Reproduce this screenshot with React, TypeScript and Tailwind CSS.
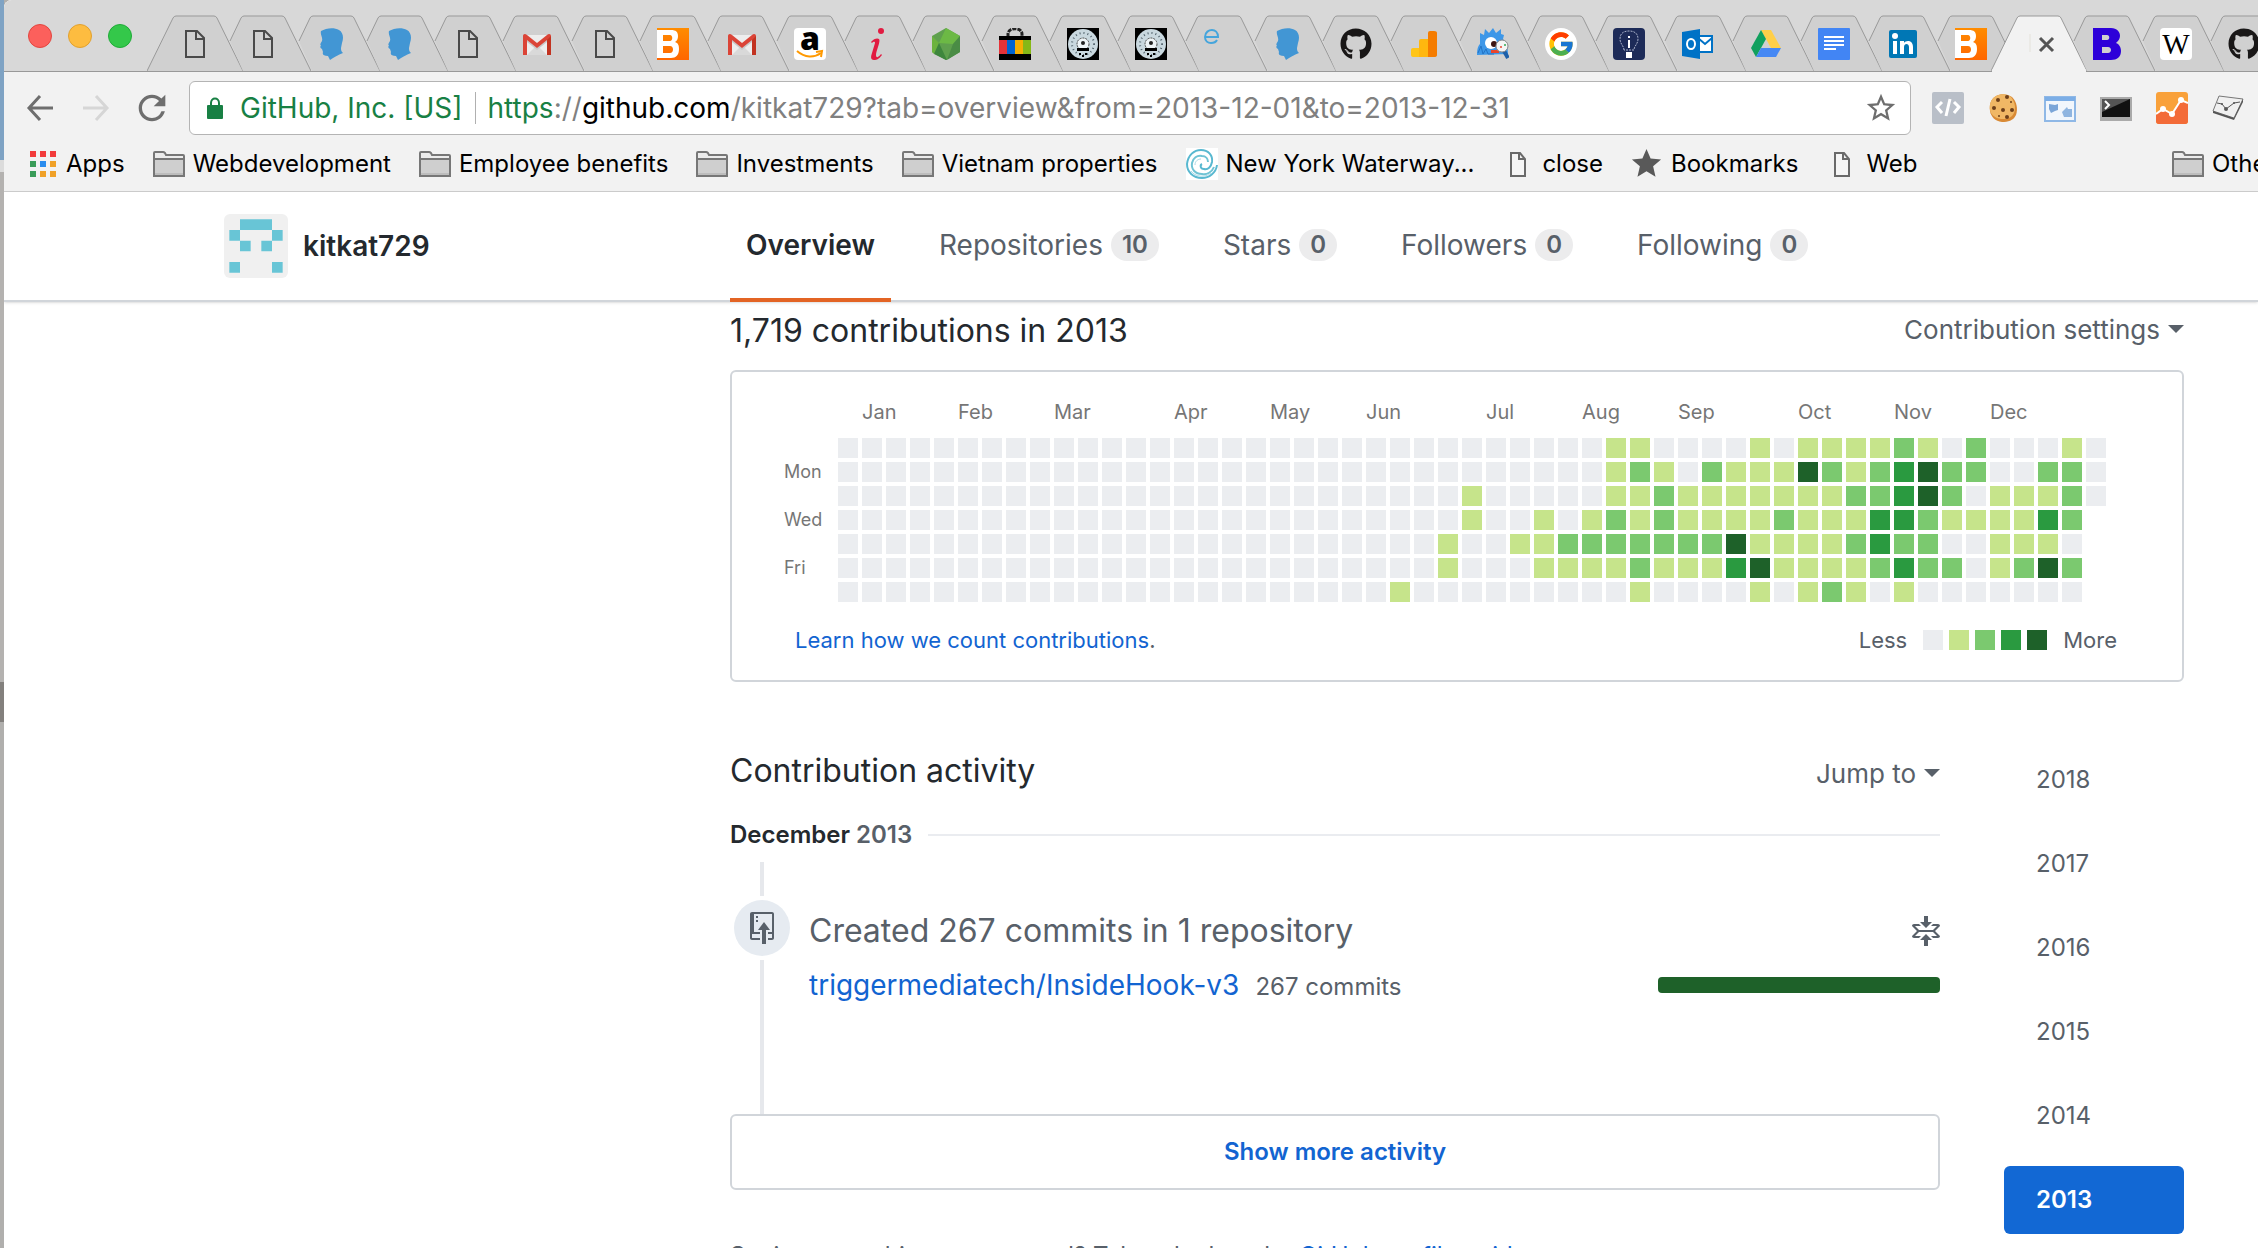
import React from "react";
import { FaGithub } from "react-icons/fa6";
import { FcGoogle } from "react-icons/fc";
import { MdRefresh, MdStar, MdStarBorder } from "react-icons/md";

/* ---------- favicons, all on a 32px square ---------- */

function Icon({ children, box = "0 0 32 32" }: { children: React.ReactNode; box?: string }) {
  return (
    <svg viewBox={box} className="size-8 shrink-0" aria-hidden="true">
      {children}
    </svg>
  );
}

const PageIcon = () => (
  <Icon>
    <path d="M7 3h11l7 7v19H7z M17 3v8h8" fill="none" stroke="#4a4a4a" strokeWidth="2" />
  </Icon>
);

const HeadIcon = () => (
  <Icon>
    <path
      d="M5 3C10 0 18-1 23 2c4 2 5 8 3 13l-1 5c0 2 0 3 2 5-5 2-9 4-13 7l-2-4c-4 0-6-1-5-4l-1-3c-2-1-2-2-1-4-1 0-1-1 1-4 1-4-2-6-1-10z"
      fill="#4296d4"
    />
  </Icon>
);

const GmailIcon = () => (
  <Icon>
    <path d="M3 7h26v20H3z" fill="#ededed" />
    <path d="M6 27l10-10 10 10z" fill="#d9d9d9" />
    <path d="M6 10l10 8 10-8v4L16 22 6 14z" fill="#c9c9c9" />
    <path d="M2 8c0-2 2-3 4-1l10 8 10-8c2-2 4-1 4 1v19h-4V12l-10 8-10-8v15H2z" fill="#db4437" />
    <path d="M26 12l4-4v19h-4z" fill="#c23321" />
  </Icon>
);

const BloggerIcon = () => (
  <Icon>
    <defs>
      <linearGradient id="blogger" x1="0" y1="0" x2="0" y2="1">
        <stop offset="0" stopColor="#ff8c00" />
        <stop offset="1" stopColor="#ff6600" />
      </linearGradient>
    </defs>
    <path d="M0 0h32v32H0z" fill="url(#blogger)" />
    <path
      fillRule="evenodd"
      d="M0 2h14c5 0 7 2 7 6 0 3-1 5-3 6 3 1 4 3 4 7 0 6-3 9-8 9H0zm6 5v6h7c3 0 3-6 0-6zm0 11v7h7c4 0 4-7 0-7z"
      fill="#fff"
    />
  </Icon>
);

const AmazonIcon = () => (
  <Icon>
    <rect width="32" height="32" rx="4" fill="#fff" />
    <text x="16" y="22" textAnchor="middle" fontFamily="Open Sans" fontWeight="800" fontSize="32">
      a
    </text>
    <path d="M3 23c8 7 17 7 24 2" fill="none" stroke="#f90" strokeWidth="2" />
    <path d="M22 24l6-1-1 6" fill="none" stroke="#f90" strokeWidth="2" />
  </Icon>
);

const ItalicIcon = () => (
  <Icon>
    <circle cx="19" cy="3" r="3" fill="#e11b41" />
    <path
      d="M9 14c3-4 7-4 8-3 2 2-3 12-3 16 0 3 2 3 5-1l1 1c-3 4-5 5-8 5-4 0-3-4-2-7l3-10c0-2-2-1-3 0z"
      fill="#e11b41"
    />
  </Icon>
);

const NodeIcon = () => (
  <Icon>
    <path d="M16 0l14 8v16l-14 8L2 24V8z" fill="#5fa04e" />
    <path d="M16 0l14 8-7 8-14-1z" fill="#6cb945" />
    <path d="M2 8l7 7L4 26l-2-2z" fill="#6cb33e" />
    <path d="M9 15l8 17-1 0L4 26z" fill="#3e863d" />
    <path d="M30 8v16l-13 8 6-16z" fill="#4a8c45" />
  </Icon>
);

const BagIcon = () => (
  <Icon>
    <path d="M9 9V6c0-7 14-7 14 0v3" fill="none" stroke="#222" strokeWidth="3" strokeDasharray="4 1" />
    <path d="M0 8h32v24H0z" fill="#000" />
    <path d="M0 12h8v14H0z" fill="#e53238" />
    <path d="M8 12h8v14H8z" fill="#0064d2" />
    <path d="M16 12h8v14h-8z" fill="#f5af02" />
    <path d="M24 12h8v14h-8z" fill="#86b817" />
  </Icon>
);

const GaugeIcon = () => (
  <Icon>
    <path d="M0 0h32v32H0z" fill="#000" />
    <circle cx="16" cy="16" r="15" fill="#c9d8df" />
    <circle cx="16" cy="16" r="11" fill="none" stroke="#51626b" strokeWidth="2" strokeDasharray="1 3" />
    <circle cx="16" cy="16" r="6" fill="#eef4f7" stroke="#444" strokeWidth="1" strokeDasharray="2 1" />
    <circle cx="16" cy="15" r="2" fill="#222" />
    <path d="M10 20h12v3H10zM12 25h2v2h-2zM18 25h2v2h-2zM15 27h2v2h-2z" fill="#000" />
  </Icon>
);

const LetterEIcon = () => (
  <Icon>
    <path d="M1 9h13c0-5-3-7-6-7S1 4 1 9c0 4 3 6 6 6 3 0 5-1 6-3" fill="none" stroke="#45a5dc" strokeWidth="2" />
  </Icon>
);

const OctocatIcon = () => <FaGithub className="size-8 shrink-0 text-[#191717]" aria-hidden="true" />;

const AnalyticsIcon = () => (
  <Icon>
    <path d="M3 22q0-2 2-2h6v9H5q-2 0-2-2z" fill="#ffc517" />
    <path d="M11 13q0-2 2-2h7v18h-9z" fill="#ffb70f" />
    <path d="M20 5q0-2 2-2h4q3 0 3 2v22q0 2-3 2h-6z" fill="#f57c00" />
  </Icon>
);

const MonsterIcon = () => (
  <Icon>
    <path
      d="M0 27c0-6 1-9 3-11L3 5l4 2 1-6 4 4 4-5 3 5 5-4v5l3 1-1 4c3 3 5 8 5 15z"
      fill="#3d97e8"
    />
    <path d="M1 25l3-7 2 8 3-5 2 5h6" fill="none" stroke="#2373c4" strokeWidth="1" />
    <circle cx="14" cy="15" r="6" fill="#fff" />
    <circle cx="17" cy="16" r="3" fill="#3b1512" />
    <path d="M14 22h8v3h-8z" fill="#e8452c" />
    <path d="M27 23l4 7" stroke="#1e5fa8" strokeWidth="4" />
    <circle cx="25" cy="18" r="6" fill="#f5f5f5" stroke="#888" strokeWidth="1" />
    <circle cx="24" cy="19" r="1" fill="#e8452c" />
    <circle cx="28" cy="17" r="1" fill="#35a853" />
  </Icon>
);

const GoogleIcon = () => (
  <span className="flex size-8 shrink-0 items-center justify-center rounded-full bg-white">
    <FcGoogle className="size-7" aria-hidden="true" />
  </span>
);

const BulbIcon = () => (
  <Icon>
    <rect width="32" height="32" rx="4" fill="#1d2b58" />
    <path
      d="M11 22c0-4-4-6-4-11C7 5 11 3 16 3s9 2 9 8c0 5-4 7-4 11z"
      fill="none"
      stroke="#a9b1c9"
      strokeWidth="1"
      strokeDasharray="2 1"
    />
    <path d="M15 8h2v2h-2zM15 12h2v8h-2zM13 24h6v6h-6z" fill="#fff" />
  </Icon>
);

const OutlookIcon = () => (
  <Icon>
    <path d="M16 8h14v16H16z" fill="#fff" stroke="#0072c6" strokeWidth="2" />
    <path d="M16 10l7 6 7-6" fill="none" stroke="#0072c6" strokeWidth="2" />
    <path d="M0 4l18-3v30L0 28z" fill="#0072c6" />
    <ellipse cx="9" cy="16" rx="4" ry="5" fill="none" stroke="#fff" strokeWidth="2" />
  </Icon>
);

const DriveIcon = () => (
  <Icon>
    <path d="M11 2h10l10 18H21z" fill="#ffcf48" />
    <path d="M11 2l5 9L6 29 1 20z" fill="#11a05e" />
    <path d="M11 20h20l-5 9H6z" fill="#4688f4" />
  </Icon>
);

const DocsIcon = () => (
  <Icon>
    <rect width="32" height="32" rx="1" fill="#4285f4" />
    <path d="M6 9h20M6 13h20M6 17h20M6 21h12" stroke="#fff" strokeWidth="2" />
  </Icon>
);

const LinkedInIcon = () => (
  <Icon>
    <rect x="2" y="2" width="28" height="28" rx="2" fill="#0077b5" />
    <circle cx="8" cy="8" r="3" fill="#fff" />
    <path d="M6 13h4v13H6zM13 13h4v2c2-3 9-3 9 4v7h-4v-7c0-4-5-4-5 0v7h-4z" fill="#fff" />
  </Icon>
);

const BlueBIcon = () => (
  <Icon>
    <path
      fillRule="evenodd"
      d="M2 0h18c6 0 9 4 9 8 0 3-2 5-4 7 3 1 5 4 5 8 0 6-4 9-10 9H2zm9 7v5h5c3 0 3-5 0-5zm0 12v6h6c4 0 4-6 0-6z"
      fill="#2d00d9"
    />
  </Icon>
);

const WikipediaIcon = () => (
  <Icon>
    <rect width="32" height="32" rx="4" fill="#fff" />
    <text x="16" y="26" textAnchor="middle" fontFamily="Liberation Serif" fontSize="29">
      W
    </text>
  </Icon>
);

/* ---------- tab strip ---------- */

type Tab = { title: string; icon?: () => React.ReactElement };

const TABS: Tab[] = [
  { title: "Page 1", icon: PageIcon },
  { title: "Page 2", icon: PageIcon },
  { title: "Profile 1", icon: HeadIcon },
  { title: "Profile 2", icon: HeadIcon },
  { title: "Page 3", icon: PageIcon },
  { title: "Gmail 1", icon: GmailIcon },
  { title: "Page 4", icon: PageIcon },
  { title: "Blogger 1", icon: BloggerIcon },
  { title: "Gmail 2", icon: GmailIcon },
  { title: "Amazon", icon: AmazonIcon },
  { title: "Info", icon: ItalicIcon },
  { title: "Node", icon: NodeIcon },
  { title: "Shop", icon: BagIcon },
  { title: "Speed 1", icon: GaugeIcon },
  { title: "Speed 2", icon: GaugeIcon },
  { title: "E", icon: LetterEIcon },
  { title: "Profile 3", icon: HeadIcon },
  { title: "GitHub 1", icon: OctocatIcon },
  { title: "Analytics", icon: AnalyticsIcon },
  { title: "Monster", icon: MonsterIcon },
  { title: "Google", icon: GoogleIcon },
  { title: "Ideas", icon: BulbIcon },
  { title: "Outlook", icon: OutlookIcon },
  { title: "Drive", icon: DriveIcon },
  { title: "Docs", icon: DocsIcon },
  { title: "LinkedIn", icon: LinkedInIcon },
  { title: "Blogger 2", icon: BloggerIcon },
  { title: "Current tab" },
  { title: "Bootstrap", icon: BlueBIcon },
  { title: "Wikipedia", icon: WikipediaIcon },
  { title: "GitHub 2", icon: OctocatIcon },
];

function TabShape({ active, first }: { active: boolean; first: boolean }) {
  const whole = active || first;
  const outline = whole
    ? "M0 56L26 3Q27 1 29 1H67Q69 1 70 3L96 56"
    : "M15 26L26 3Q27 1 29 1H67Q69 1 70 3L96 56";
  const body = outline + (whole ? "Z" : "H28Z");
  return (
    <svg
      viewBox="0 0 96 57"
      className="absolute -left-3.5 top-0 h-[57px] w-24"
      aria-hidden="true"
    >
      <path d={body} fill={active ? "#f2f2f2" : "#d0d0d0"} />
      <path d={outline} fill="none" stroke="#999" strokeWidth="1" />
      {active ? <path d="M1 56h94" stroke="#f2f2f2" strokeWidth="3" /> : null}
    </svg>
  );
}

function TabStrip() {
  return (
    <div className="flex h-[72px] items-end border-b border-[#999] bg-[#d8d8d8]">
      <div className="flex w-[157px] shrink-0 gap-4 self-center pl-6">
        <button aria-label="Close window" className="size-6 rounded-full border border-[#e2463f] bg-[#fc605c]" />
        <button aria-label="Minimize window" className="size-6 rounded-full border border-[#e1a12f] bg-[#fdbc40]" />
        <button aria-label="Zoom window" className="size-6 rounded-full border border-[#1fab38] bg-[#34c84a]" />
      </div>
      <div role="tablist" className="-mr-5 flex h-14 flex-1">
        {TABS.map((tab, i) => (
          <button
            key={tab.title}
            role="tab"
            aria-selected={!tab.icon}
            aria-label={tab.title}
            className="relative min-w-0 flex-1"
          >
            <TabShape active={!tab.icon} first={i === 0} />
            <span className="relative flex h-full items-center justify-center pt-0.5">
              {tab.icon ? (
                <tab.icon />
              ) : (
                <Icon>
                  <path d="M7 6v18" stroke="#e4e2da" strokeWidth="1" />
                  <path d="M17 10l13 13M30 10L17 23" stroke="#555" strokeWidth="3" />
                </Icon>
              )}
            </span>
          </button>
        ))}
      </div>
    </div>
  );
}

/* ---------- toolbar ---------- */

const EXTENSIONS: { name: string; art: React.ReactElement }[] = [
  {
    name: "Code inspector",
    art: (
      <Icon>
        <rect width="32" height="32" rx="2" fill="#b9bfc8" />
        <path d="M10 10l-5 5 5 6M22 10l5 5-5 6M18 7l-4 17" fill="none" stroke="#fff" strokeWidth="3" />
      </Icon>
    ),
  },
  {
    name: "Cookies",
    art: (
      <Icon>
        <path d="M8 4c5-3 12-2 16 1 5 5 6 12 4 18-3 6-8 7-14 7C7 29 3 25 2 19 1 12 3 7 8 4z" fill="#d98a35" />
        <path d="M8 4c5-3 12-2 15 1 4 5 5 11 3 16-3 6-8 6-13 6C7 26 3 23 2 18 1 12 3 7 8 4z" fill="#f0b765" />
        <g fill="#6d3f1a">
          <circle cx="10" cy="8" r="2" />
          <circle cx="19" cy="5" r="2" />
          <circle cx="23" cy="10" r="1" />
          <circle cx="6" cy="16" r="2" />
          <circle cx="15" cy="18" r="2" />
          <circle cx="24" cy="18" r="2" />
          <circle cx="11" cy="24" r="1" />
          <circle cx="19" cy="25" r="2" />
        </g>
      </Icon>
    ),
  },
  {
    name: "Window resizer",
    art: (
      <Icon>
        <path d="M1 5h30v24H1z" fill="#f1f6fc" stroke="#8fb8e6" strokeWidth="2" />
        <path d="M1 5h30v4H1z" fill="#7caee6" />
        <path d="M5 12l6 1 3-1 0 6-3 1-4 2-2-4z" fill="#7aa5d8" />
        <path d="M18 20l5-5 1 2 4 0v8h-8z" fill="#8fb5e0" />
      </Icon>
    ),
  },
  {
    name: "Terminal",
    art: (
      <Icon>
        <path d="M0 5h32v24H0z" fill="#aaa" />
        <path d="M2 7h28v18H2z" fill="#111" />
        <path d="M2 7h28L2 20z" fill="#555" />
        <path d="M5 9l4 4-4 4" fill="none" stroke="#fff" strokeWidth="2" />
      </Icon>
    ),
  },
  {
    name: "Page analytics",
    art: (
      <Icon>
        <rect width="32" height="32" rx="3" fill="#f9a13a" />
        <path d="M0 22l7-5 9 6 9-14 7 2v18q0 3-3 3H3q-3 0-3-3z" fill="#f36b38" />
        <path d="M0 22l7-5 9 5L25 8l7 3" fill="none" stroke="#fff" strokeWidth="2" />
        <circle cx="7" cy="17" r="3" fill="#fff" />
        <circle cx="16" cy="22" r="3" fill="#fff" />
        <circle cx="25" cy="8" r="3" fill="#fff" />
      </Icon>
    ),
  },
  {
    name: "Graph viewer",
    art: (
      <Icon>
        <path d="M7 4l24 3-9 19L1 19z" fill="#f0f0f0" stroke="#777" strokeWidth="1" />
        <path d="M1 19l21 7 9-19v3l-9 18L1 21z" fill="#555" />
        <path d="M5 11l5 1 4 5 8-6 6-1" fill="none" stroke="#555" strokeWidth="1" />
        <circle cx="14" cy="17" r="2" fill="#555" />
        <circle cx="10" cy="12" r="1" fill="#555" />
        <circle cx="22" cy="11" r="1" fill="#555" />
      </Icon>
    ),
  },
];

function Toolbar() {
  return (
    <div className="flex h-[72px] items-center pl-5 pr-3.5">
      <button aria-label="Back" className="w-9 shrink-0">
        <svg viewBox="0 0 36 32" className="h-8 w-9" aria-hidden="true">
          <path d="M29 16H5M16 4L5 16l11 12" fill="none" stroke="#6e6e6e" strokeWidth="3" />
        </svg>
      </button>
      <button aria-label="Forward" className="ml-5 w-9 shrink-0">
        <svg viewBox="0 0 36 32" className="h-8 w-9" aria-hidden="true">
          <path d="M3 16h24M16 4l11 12-11 12" fill="none" stroke="#d6d6d6" strokeWidth="3" />
        </svg>
      </button>
      <button aria-label="Reload" className="ml-4 shrink-0">
        <MdRefresh className="size-10 text-[#6e6e6e]" aria-hidden="true" />
      </button>
      <div className="ml-[17px] flex h-[54px] flex-1 items-center rounded-md border border-[#b4b4b4] bg-white pl-[17px] pr-3 text-[28px]">
        <svg viewBox="0 0 16 22" className="mr-[17px] h-[22px] w-4 shrink-0" aria-hidden="true">
          <path d="M4 9V6c0-6 8-6 8 0v3" fill="none" stroke="#188044" strokeWidth="2" />
          <rect y="8" width="16" height="14" rx="1" fill="#188044" />
        </svg>
        <span className="whitespace-nowrap text-[#188044]">GitHub, Inc. [US]</span>
        <span className="mx-3 h-8 w-px bg-[#b0b0b0]" />
        <label htmlFor="address" className="whitespace-nowrap text-[#808080]">
          <span className="text-[#188044]">https</span>://<span className="text-black">github.com</span>
        </label>
        <input
          id="address"
          defaultValue="/kitkat729?tab=overview&from=2013-12-01&to=2013-12-31"
          className="min-w-0 flex-1 bg-transparent text-[#808080] outline-none"
        />
        <button aria-label="Bookmark this page">
          <MdStarBorder className="size-[34px] text-[#6e6e6e]" aria-hidden="true" />
        </button>
      </div>
      <div className="ml-[21px] flex gap-6">
        {EXTENSIONS.map((ext) => (
          <button key={ext.name} aria-label={ext.name}>
            {ext.art}
          </button>
        ))}
      </div>
    </div>
  );
}

/* ---------- bookmarks bar ---------- */

const FolderIcon = () => (
  <Icon>
    <path d="M1 28V5q0-1 1-1h8q1 0 2 1l1 2h17q1 0 1 1v20z" fill="#ececec" stroke="#777" strokeWidth="2" />
    <path d="M1 11h30v17H1z" fill="#cfcfcf" stroke="#777" strokeWidth="2" />
    <path d="M2 25h28v2H2z" fill="#bdbdbd" />
  </Icon>
);

const SmallPageIcon = () => (
  <Icon>
    <path d="M9 5h9l5 6v17H9z M17 5v6h6" fill="#f6f6f6" stroke="#6a6a6a" strokeWidth="2" />
  </Icon>
);

const SwirlIcon = () => (
  <Icon>
    <path d="M0 0h32v32H0z" fill="#fff" />
    <path
      d="M31 17c-1 8-8 13-15 13C7 30 1 24 1 16 2 7 8 2 15 2c7 0 12 5 11 12-1 5-4 8-8 7-4 0-4-4-2-5"
      fill="none"
      stroke="#58b8d0"
      strokeWidth="2"
    />
    <path
      d="M28 19c-2 5-7 8-12 7C9 26 5 21 6 15c1-5 5-8 10-7 4 0 6 3 6 6"
      fill="none"
      stroke="#6fc3d4"
      strokeWidth="2"
    />
    <path d="M9 17c0-4 3-6 6-6M5 23c4 6 14 7 20 2" fill="none" stroke="#a9d9e6" strokeWidth="1" />
  </Icon>
);

const StarIcon = () => (
  <span className="flex size-8 items-center justify-center">
    <MdStar className="size-[35px] shrink-0 text-[#595959]" aria-hidden="true" />
  </span>
);

const AppsIcon = () => (
  <svg viewBox="0 0 26 26" className="size-[26px] shrink-0" aria-hidden="true">
    <path d="M0 0h6v6H0zM10 0h6v6h-6zM20 0h6v6h-6z" fill="#f23b3b" />
    <path d="M0 10h6v6H0zM0 20h6v6H0z" fill="#3a9c58" />
    <path d="M10 10h6v6h-6z" fill="#2a8cee" />
    <path d="M20 10h6v6h-6zM10 20h6v6h-6zM20 20h6v6h-6z" fill="#f0a128" />
  </svg>
);

const BOOKMARKS: { label: string; icon: () => React.ReactElement }[] = [
  { label: "Webdevelopment", icon: FolderIcon },
  { label: "Employee benefits", icon: FolderIcon },
  { label: "Investments", icon: FolderIcon },
  { label: "Vietnam properties", icon: FolderIcon },
  { label: "New York Waterway...", icon: SwirlIcon },
  { label: "close", icon: SmallPageIcon },
  { label: "Bookmarks", icon: StarIcon },
  { label: "Web", icon: SmallPageIcon },
];

function BookmarksBar() {
  return (
    <nav
      aria-label="Bookmarks"
      className="flex h-12 items-center gap-7 overflow-hidden whitespace-nowrap border-b border-[#cfcfcf] pb-2 pl-[26px] text-2xl text-black"
    >
      <a href="#apps" className="flex items-center gap-2.5">
        <AppsIcon />
        Apps
      </a>
      {BOOKMARKS.map((mark) => (
        <a key={mark.label} href="#bookmark" className="flex shrink-0 items-center gap-2">
          <mark.icon />
          {mark.label}
        </a>
      ))}
      <a href="#other" className="ml-auto flex w-[86px] shrink-0 items-center gap-2">
        <FolderIcon />
        Other Bookmarks
      </a>
    </nav>
  );
}

/* ---------- profile header ---------- */

const NAV = [
  { label: "Repositories", count: 10 },
  { label: "Stars", count: 0 },
  { label: "Followers", count: 0 },
  { label: "Following", count: 0 },
];

function ProfileHeader() {
  return (
    <header className="grid h-[110px] grid-cols-[726px_1fr] border-b-2 border-[#d1d5da] text-[28px] shadow-sm">
      <div className="flex items-center gap-[15px] pl-[220px]">
        <svg viewBox="-0.5 -0.5 6 6" className="size-16 rounded-md bg-[#f0f0f0]" role="img" aria-label="kitkat729 avatar">
          <path d="M1 0h3v1H1zM0 1h1v1H0zM4 1h1v1H4zM1 2h1v1H1zM3 2h1v1H3zM0 4h1v1H0zM4 4h1v1H4z" fill="#68c5d6" />
        </svg>
        <a href="#profile" className="font-semibold text-[#24292e]">
          kitkat729
        </a>
      </div>
      <nav aria-label="Profile" className="-mb-0.5 flex gap-8 text-[#586069]">
        <a
          href="#overview"
          aria-current="page"
          className="flex items-center border-b-4 border-[#e36424] px-4 font-semibold text-[#24292e]"
        >
          Overview
        </a>
        {NAV.map((item) => (
          <a key={item.label} href="#tab" className="flex items-center gap-2 border-b-4 border-transparent px-4">
            {item.label}
            <span className="flex h-8 items-center rounded-full bg-[#ececed] px-[11px] text-2xl font-semibold">
              {item.count}
            </span>
          </a>
        ))}
      </nav>
    </header>
  );
}

/* ---------- contribution calendar ---------- */

const LEVELS = ["bg-[#ebedf0]", "bg-[#c6e48b]", "bg-[#7bc96f]", "bg-[#2a9a40]", "bg-[#1e6129]"];
const QUIET = "0".repeat(23);
const WEEKDAYS = [
  { label: "", days: QUIET + "000000000110000101111210200010" },
  { label: "Mon", days: QUIET + "000000000121021114212342200220" },
  { label: "", days: QUIET + "000100000112111111122342011120" },
  { label: "Wed", days: QUIET + "00010010121211112111332111132" },
  { label: "", days: QUIET + "00100112222222411112322001110" },
  { label: "Fri", days: QUIET + "00100011112111341111232201242" },
  { label: "", days: QUIET + "10000000001000010121010000000" },
];

const MONTHS = [
  { name: "Jan", week: 2 },
  { name: "Feb", week: 6 },
  { name: "Mar", week: 10 },
  { name: "Apr", week: 15 },
  { name: "May", week: 19 },
  { name: "Jun", week: 23 },
  { name: "Jul", week: 28 },
  { name: "Aug", week: 32 },
  { name: "Sep", week: 36 },
  { name: "Oct", week: 41 },
  { name: "Nov", week: 45 },
  { name: "Dec", week: 49 },
];

function Caret() {
  return (
    <svg viewBox="0 0 16 8" className="h-2 w-4" aria-hidden="true">
      <path d="M0 0h16L8 8z" fill="#586069" />
    </svg>
  );
}

function Calendar() {
  return (
    <section>
      <div className="flex h-[58px] items-center justify-between">
        <h2 className="text-[32px] text-[#24292e]">1,719 contributions in 2013</h2>
        <button className="flex items-center gap-2 pb-1 text-[26px] text-[#586069]">
          Contribution settings
          <Caret />
        </button>
      </div>
      <div className="mt-2.5 rounded-md border-2 border-[#d1d5da] pb-[22px] pt-[26px]">
        <div className="pl-[52px] text-xl text-[#767676]">
          <div className="ml-[54px] grid h-[26px] grid-cols-[repeat(53,20px)] items-center gap-x-1">
            {MONTHS.map((m) => (
              <span key={m.name} style={{ gridColumn: `${m.week} / span 3` }}>
                {m.name}
              </span>
            ))}
          </div>
          <div className="mt-3.5 flex flex-col gap-1">
            {WEEKDAYS.map((row, r) => (
              <div key={r} className="flex h-5 items-center gap-1">
                <span className="w-[50px] text-lg">{row.label}</span>
                {row.days.split("").map((level, d) => (
                  <span key={d} className={`size-5 shrink-0 ${LEVELS[Number(level)]}`} />
                ))}
              </div>
            ))}
          </div>
        </div>
        <div className="mt-5 flex h-9 items-center pl-[63px] pr-[65px] text-[22px] text-[#586069]">
          <p>
            <a href="#learn" className="text-[#1264d1]">
              Learn how we count contributions
            </a>
            .
          </p>
          <span className="ml-auto mr-4">Less</span>
          <div className="flex gap-1.5">
            {LEVELS.map((level) => (
              <span key={level} className={`size-5 ${level}`} />
            ))}
          </div>
          <span className="ml-4">More</span>
        </div>
      </div>
    </section>
  );
}

/* ---------- activity ---------- */

const YEARS = [2018, 2017, 2016, 2015, 2014, 2013];

function Activity() {
  return (
    <section className="mt-16 grid grid-cols-[1fr_180px] items-start gap-16">
      <div>
        <div className="flex h-[50px] items-center justify-between">
          <h2 className="text-[32px] text-[#24292e]">Contribution activity</h2>
          <button className="flex items-center gap-2 pt-1 text-[26px] text-[#586069]">
            Jump to
            <Caret />
          </button>
        </div>
        <h3 className="mt-6 flex h-[30px] items-center gap-4 text-2xl font-semibold text-[#24292e]">
          <span>
            December <span className="text-[#586069]">2013</span>
          </span>
          <span className="h-0.5 flex-1 bg-[#eaecf0]" />
        </h3>
        <div className="mt-3 flex h-[252px] gap-[15px]">
          <div className="flex w-16 shrink-0 flex-col items-center gap-1">
            <span className="h-[34px] w-1 bg-[#e6e8ec]" />
            <span className="flex size-14 shrink-0 items-center justify-center rounded-full bg-[#e6ebf1]">
              <svg viewBox="0 0 12 16" className="h-8 w-6" aria-hidden="true">
                <path
                  d="M4 3H3V2h1v1zM3 5h1V4H3v1zm4 0L4 9h2v7h2V9h2L7 5zm4-5H1C.45 0 0 .45 0 1v12c0 .55.45 1 1 1h4v-1H1v-2h4v-1H2V1h9.02L11 10H9v1h2v2H9v1h2c.55 0 1-.45 1-1V1c0-.55-.45-1-1-1z"
                  fill="#586069"
                />
              </svg>
            </span>
            <span className="w-1 flex-1 bg-[#e6e8ec]" />
          </div>
          <div className="flex-1 pt-12">
            <div className="flex h-[42px] items-center justify-between text-[32px] text-[#586069]">
              Created 267 commits in 1 repository
              <button aria-label="Collapse">
                <svg viewBox="0 0 14 15" className="h-[30px] w-7" aria-hidden="true">
                  <path
                    d="M7 9l3 3H8v3H6v-3H4l3-3zm3-6H8V0H6v3H4l3 3 3-3zm4 2c0-.55-.45-1-1-1h-2.5l-1 1h3l-2 2h-7l-2-2h3l-1-1H1c-.55 0-1 .45-1 1l2.5 2.5L0 10c0 .55.45 1 1 1h2.5l1-1h-3l2-2h7l2 2h-3l1 1H13c.55 0 1-.45 1-1l-2.5-2.5L14 5z"
                    fill="#586069"
                  />
                </svg>
              </button>
            </div>
            <div className="mt-3 flex h-[42px] items-baseline">
              <a href="#repo" className="text-[28px] text-[#1264d1]">
                triggermediatech/InsideHook-v3
              </a>
              <span className="ml-4 text-2xl text-[#586069]">267 commits</span>
              <span className="ml-auto h-4 w-[282px] self-center rounded bg-[#1e6129]" />
            </div>
          </div>
        </div>
        <button className="h-[76px] w-full rounded-md border-2 border-[#d1d5da] text-2xl font-semibold text-[#1264d1]">
          Show more activity
        </button>
        <p className="mt-12 text-2xl leading-9 text-[#586069]">
          Seeing something unexpected? Take a look at the{" "}
          <a href="#guide" className="text-[#1264d1]">
            GitHub profile guide
          </a>
          .
        </p>
      </div>
      <ul className="flex flex-col gap-4 text-2xl text-[#586069]">
        {YEARS.map((year) => (
          <li key={year}>
            <a
              href="#year"
              className={
                year === 2013
                  ? "flex h-[68px] items-center rounded-md bg-[#1268d4] pl-8 font-semibold text-white"
                  : "flex h-[68px] items-center pl-8"
              }
            >
              {year}
            </a>
          </li>
        ))}
      </ul>
    </section>
  );
}

export default function App() {
  return (
    <div className="flex h-screen overflow-hidden bg-[#b0afad] font-['Inter',sans-serif]">
      <div className="flex w-1 shrink-0 flex-col">
        <span className="h-40 bg-[#7fa3c4]" />
        <span className="h-3 bg-[#dcdcdc]" />
        <span className="h-[510px] bg-[#b4b2b0]" />
        <span className="h-10 bg-[#83807d]" />
      </div>
      <div className="relative min-w-0 flex-1 overflow-hidden rounded-tl-lg bg-white">
        <div className="bg-[#f2f2f2]">
          <TabStrip />
          <Toolbar />
          <BookmarksBar />
        </div>
        <ProfileHeader />
        <main className="pl-[726px] pr-[74px]">
          <Calendar />
          <Activity />
        </main>
      </div>
    </div>
  );
}
